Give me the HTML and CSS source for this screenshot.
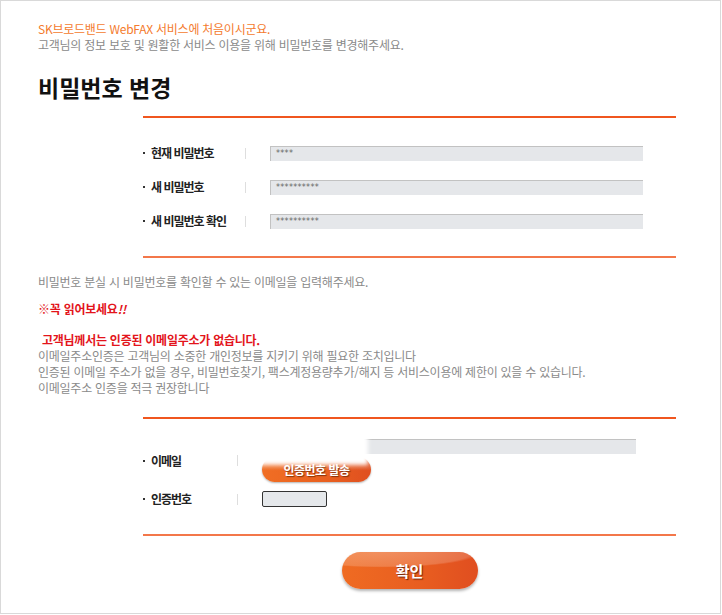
FILE: index.html
```html
<!DOCTYPE html>
<html lang="ko">
<head>
<meta charset="utf-8">
<title>비밀번호 변경</title>
<link rel="stylesheet" href="styles.css">
</head>
<body>
<div class="frame">
  <div class="intro">
    <p class="intro-hi">SK브로드밴드 WebFAX 서비스에 처음이시군요.</p>
    <p class="intro-sub">고객님의 정보 보호 및 원활한 서비스 이용을 위해 비밀번호를 변경해주세요.</p>
  </div>
  <h1 class="title">비밀번호 변경</h1>

  <div class="form-box form-box--pw">
    <div class="row">
      <span class="label"><span class="dot"></span>현재 비밀번호</span>
      <span class="sep"></span>
      <div class="field field--pw"><span class="mask">****</span></div>
    </div>
    <div class="row">
      <span class="label"><span class="dot"></span>새 비밀번호</span>
      <span class="sep"></span>
      <div class="field field--pw"><span class="mask">**********</span></div>
    </div>
    <div class="row">
      <span class="label"><span class="dot"></span>새 비밀번호 확인</span>
      <span class="sep"></span>
      <div class="field field--pw"><span class="mask">**********</span></div>
    </div>
  </div>

  <div class="notice">
    <p class="notice-lead">비밀번호 분실 시 비밀번호를 확인할 수 있는 이메일을 입력해주세요.</p>
    <p class="notice-warn">※꼭 읽어보세요<em>!!</em></p>
    <p class="notice-alert">고객님께서는 인증된 이메일주소가 없습니다.</p>
    <p class="notice-text">이메일주소인증은 고객님의 소중한 개인정보를 지키기 위해 필요한 조치입니다</p>
    <p class="notice-text">인증된 이메일 주소가 없을 경우, 비밀번호찾기, 팩스계정용량추가/해지 등 서비스이용에 제한이 있을 수 있습니다.</p>
    <p class="notice-text">이메일주소 인증을 적극 권장합니다</p>
  </div>

  <div class="form-box form-box--email">
    <div class="row row--email">
      <span class="label label--narrow"><span class="dot"></span>이메일</span>
      <span class="sep"></span>
      <div class="email-cell">
        <div class="field field--email"></div>
        <button class="btn-send" type="button">인증번호 발송</button>
        <div class="redact"></div>
      </div>
    </div>
    <div class="row row--code">
      <span class="label label--narrow"><span class="dot"></span>인증번호</span>
      <span class="sep"></span>
      <div class="code-box"></div>
    </div>
  </div>

  <div class="actions">
    <button class="btn-ok" type="button">확인</button>
  </div>
</div>
</body>
</html>
```

FILE: styles.css
```css
html, body {
  margin: 0;
  padding: 0;
  background: #ffffff;
}

body {
  font-family: "Noto Sans CJK KR", "Noto Sans", sans-serif;
  font-size: 12px;
  color: #333;
}

p {
  margin: 0;
}

.frame {
  width: 721px;
  height: 614px;
  box-sizing: border-box;
  border: 1px solid #d9d9d9;
  background: #fff;
}

.intro {
  padding: 20px 0 0 37px;
}

.intro-hi,
.intro-sub {
  font-size: 12px;
  line-height: 16px;
  letter-spacing: -0.25px;
}

.intro-hi {
  color: #f47b2e;
}

.intro-sub {
  color: #8a8a8a;
}

.title {
  margin: 21px 0 0 37px;
  font-size: 23px;
  line-height: 26px;
  font-weight: 700;
  letter-spacing: 0;
  color: #111;
}

.form-box {
  margin-left: 142px;
  width: 533px;
}

.form-box--pw {
  margin-top: 16px;
  border-top: 2px solid #f0561f;
  border-bottom: 2px solid #f3774a;
  padding: 18px 0;
}

.row {
  display: flex;
  align-items: center;
}

.form-box--pw .row {
  height: 34px;
}

.label {
  display: flex;
  align-items: center;
  width: 102px;
  font-size: 12px;
  line-height: 16px;
  font-weight: 700;
  letter-spacing: -1px;
  color: #222;
}

.label--narrow {
  width: 94px;
}

.dot {
  width: 2px;
  height: 2px;
  background: #333;
  margin-right: 6px;
  flex: none;
}

.sep {
  width: 1px;
  height: 11px;
  background: #dedede;
  margin-right: 24px;
  flex: none;
}

.field {
  box-sizing: border-box;
  background: #e5e7ea;
  border-top: 1px solid #c2c2c2;
  border-left: 1px solid #c2c2c2;
}

.field--pw {
  width: 373px;
  height: 15px;
  display: flex;
  align-items: center;
}

.mask {
  padding-left: 5px;
  font-family: "DejaVu Sans", sans-serif;
  font-size: 8px;
  line-height: 10px;
  letter-spacing: 0.3px;
  color: #666;
}

.notice {
  margin: 16px 0 0 37px;
}

.notice p {
  font-size: 12px;
  line-height: 16px;
  letter-spacing: -0.25px;
}

.notice-lead {
  color: #8a8a8a;
}

.notice-warn {
  margin-top: 11px;
  color: #e3141b;
  font-weight: 700;
}

.notice-warn em {
  font-style: italic;
}

.notice-alert {
  margin-top: 15px;
  padding-left: 4px;
  color: #e3141b;
  font-weight: 700;
}

.notice-text {
  color: #8a8a8a;
}

.form-box--email {
  margin-top: 21px;
  border-top: 2px solid #f0561f;
  border-bottom: 2px solid #f3774a;
  padding: 20px 0 26px;
}

.email-cell {
  position: relative;
  display: flex;
  flex-direction: column;
  align-items: flex-start;
}

.field--email {
  width: 374px;
  height: 15px;
}

.btn-send {
  margin-top: 3px;
  width: 109px;
  height: 25px;
  border: 0;
  border-radius: 13px;
  padding: 0;
  background:
    linear-gradient(180deg, rgba(255, 255, 255, 0.22) 0, rgba(255, 255, 255, 0.08) 45%, rgba(255, 255, 255, 0) 55%),
    linear-gradient(90deg, #f06e24 0%, #e9601f 60%, #df4f20 100%);
  box-shadow: 0 1px 2px rgba(0, 0, 0, 0.3);
  color: #fff;
  font-family: "Noto Sans CJK KR", "Noto Sans", sans-serif;
  font-size: 12px;
  font-weight: 700;
  letter-spacing: -0.5px;
  text-shadow: 1px 1px 1px rgba(90, 30, 0, 0.7);
}

.redact {
  position: absolute;
  left: -9px;
  top: -6px;
  width: 115px;
  height: 32px;
  background: #ffffff;
  filter: blur(2px);
}

.row--code {
  margin-top: 8px;
  height: 18px;
}

.code-box {
  box-sizing: border-box;
  width: 65px;
  height: 16px;
  border: 1px solid #333;
  border-radius: 2px;
  background: #e5e8eb;
}

.actions {
  margin: 16px 0 0 142px;
  width: 533px;
  display: flex;
  justify-content: center;
}

.btn-ok {
  width: 136px;
  height: 37px;
  border: 0;
  border-radius: 19px;
  padding: 0;
  background:
    radial-gradient(120% 70% at 30% 0%, rgba(255, 255, 255, 0.28) 0, rgba(255, 255, 255, 0.18) 55%, rgba(255, 255, 255, 0) 60%),
    linear-gradient(90deg, #ef6b22 0%, #e85d20 60%, #e04e20 100%);
  box-shadow: 0 2px 3px rgba(0, 0, 0, 0.3);
  color: #fff;
  font-family: "Noto Sans CJK KR", "Noto Sans", sans-serif;
  font-size: 15px;
  font-weight: 700;
  text-shadow: 1px 1px 1px rgba(80, 20, 0, 0.8);
}
```
